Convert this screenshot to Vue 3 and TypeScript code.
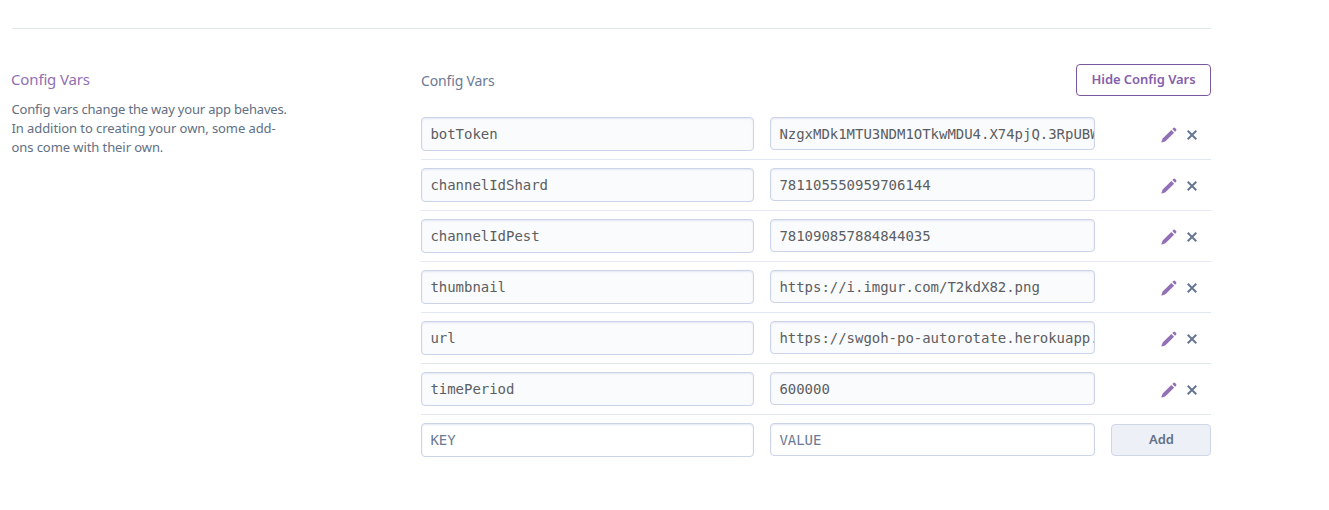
<script setup lang="ts">
interface ConfigVar {
  key: string
  value: string
}

const vars: ConfigVar[] = [
  { key: 'botToken', value: 'NzgxMDk1MTU3NDM1OTkwMDU4.X74pjQ.3RpUBW' },
  { key: 'channelIdShard', value: '781105550959706144' },
  { key: 'channelIdPest', value: '781090857884844035' },
  { key: 'thumbnail', value: 'https://i.imgur.com/T2kdX82.png' },
  { key: 'url', value: 'https://swgoh-po-autorotate.herokuapp.com' },
  { key: 'timePeriod', value: '600000' },
]
</script>

<template>
  <main class="settings">
    <section class="panel">
      <aside class="about">
        <h2 class="title">Config Vars</h2>
        <p class="description">
          <span class="lead">Config vars change the way your app behaves.</span><br />
          In addition to creating your own, some add-<br />
          ons come with their own.
        </p>
      </aside>
      <div class="content">
        <header class="head">
          <span class="label">Config Vars</span>
          <button class="btn btn-outline" type="button">Hide Config Vars</button>
        </header>
        <div v-for="item in vars" :key="item.key" class="row">
          <div class="field key">{{ item.key }}</div>
          <div class="field value">{{ item.value }}</div>
          <div class="actions">
            <svg class="pencil" width="16" height="16" viewBox="0 0 16 16">
              <path d="M0.9 15.6 Q0.2 15.7 0.4 15 L1.5 12 Q1.6 11.6 1.9 11.3 L10.3 2.9 L13.1 5.7 L4.7 14.1 Q4.4 14.4 4 14.5 Z" />
              <path d="M11.3 1.9 L12.3 0.9 Q13.2 0.2 14.1 0.9 L15.1 1.9 Q15.8 2.8 15.1 3.7 L14.1 4.7 Z" />
            </svg>
            <svg class="cross" width="10" height="10" viewBox="0 0 10 10">
              <path d="M0.7 0.7 L9.3 9.3 M9.3 0.7 L0.7 9.3" />
            </svg>
          </div>
        </div>
        <div class="row row-new">
          <div class="field key empty">KEY</div>
          <div class="field value empty">VALUE</div>
          <button class="btn btn-add" type="button">Add</button>
        </div>
      </div>
    </section>
  </main>
</template>

<style>
body {
  margin: 0;
  background: #fff;
}
</style>

<style scoped>
.settings {
  box-sizing: border-box;
  width: 1211px;
  padding: 28px 0 0 12px;
  font-family: 'Noto Sans', sans-serif;
}
.panel {
  display: flex;
  border-top: 1px solid #e3e7f1;
  padding-top: 35px;
}
.about {
  width: 409px;
  flex: none;
}
.title {
  margin: 3px 0 0 -1px;
  font-size: 15px;
  line-height: 24px;
  font-weight: 400;
  letter-spacing: -0.15px;
  color: #9070b3;
}
.description {
  margin: 9px 0 0 -0.5px;
  font-size: 13px;
  line-height: 19px;
  letter-spacing: -0.08px;
  color: #626f84;
  white-space: nowrap;
}
.lead {
  letter-spacing: -0.19px;
}
.content {
  flex: 1;
  min-width: 0;
}
.head {
  display: flex;
  justify-content: space-between;
  height: 45px;
}
.label {
  padding-top: 7px;
  font-size: 14px;
  line-height: 20px;
  letter-spacing: -0.15px;
  color: #6b7a95;
}
.btn {
  box-sizing: border-box;
  height: 32px;
  padding: 0 0 2px;
  border-radius: 4px;
  font-family: inherit;
  font-size: 13px;
  font-weight: 600;
  letter-spacing: -0.05px;
  white-space: nowrap;
}
.btn-outline {
  width: 135px;
  border: 1px solid #79589f;
  background: #fff;
  color: #8560ab;
}
.btn-add {
  width: 100px;
  margin: 1px 0 0 16px;
  padding-left: 1px;
  border: 1px solid #cfd7e6;
  background: #edf0f6;
  color: #62718a;
}
.row {
  display: flex;
  align-items: flex-start;
  height: 34px;
  padding: 8px 0;
  border-bottom: 1px solid #e3e7f1;
}
.row-new {
  border-bottom: 0;
}
.field {
  box-sizing: border-box;
  flex: none;
  height: 34px;
  padding-left: 8.4px;
  border: 1px solid #cbd4e8;
  border-radius: 4px;
  background: #fafbfd;
  box-shadow: inset 0 1px 2px #e3e7f1;
  overflow: hidden;
  white-space: nowrap;
  font-family: 'DejaVu Sans Mono', monospace;
  font-size: 14px;
  letter-spacing: -0.028px;
  line-height: 32px;
  color: #5c5e62;
}
.key {
  width: 333px;
}
.value {
  width: 325px;
  height: 33px;
  margin-left: 16px;
}
.empty {
  background: #fff;
  color: #6b7a95;
}
.actions {
  display: flex;
  align-items: center;
  gap: 10px;
  margin: 10px 0 0 66px;
}
.pencil {
  fill: #9370b5;
}
.cross {
  fill: none;
  stroke: #667791;
  stroke-width: 2;
}
</style>
